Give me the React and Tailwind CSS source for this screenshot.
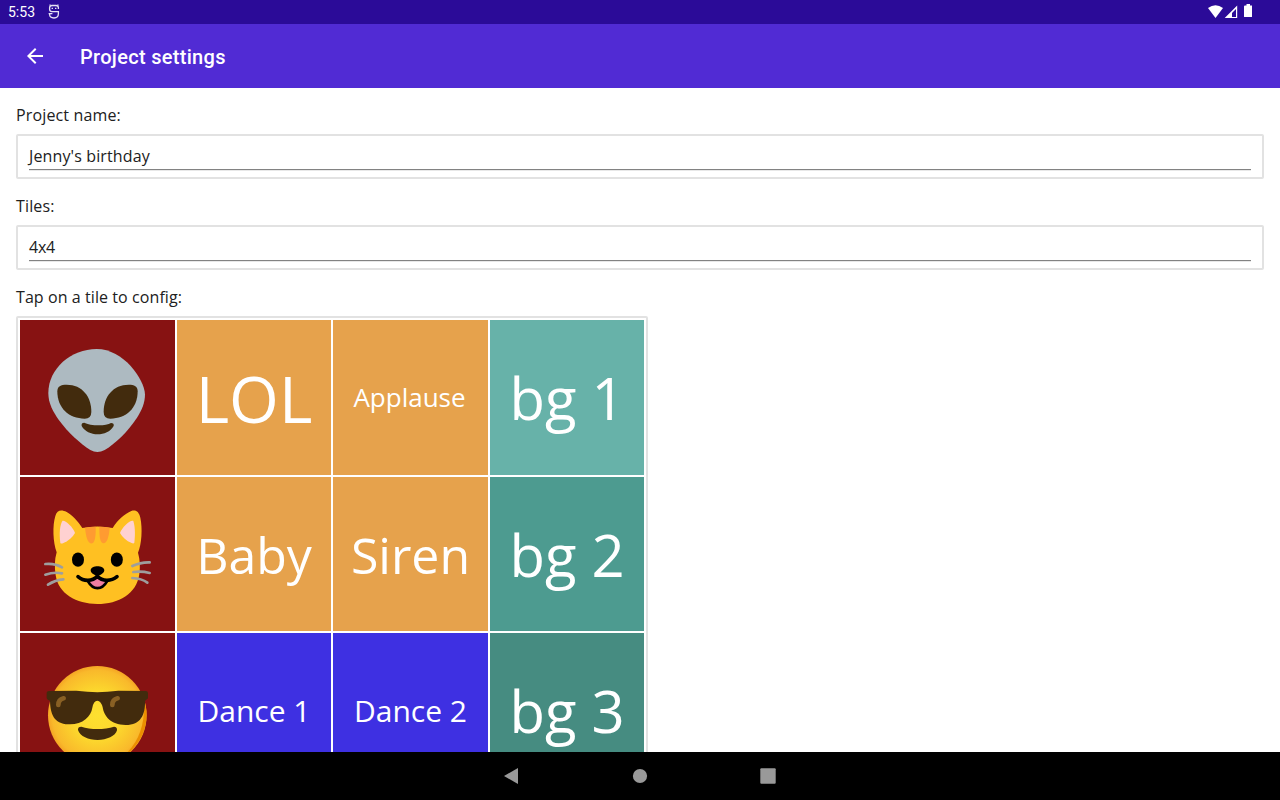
const Alien = () => (
  <svg className="h-full w-full" viewBox="12 12 465 465">
    <path fill="#adbac1" d="M242 99C165 99 97 158 97 231C97 262 111 287 128 311C157 351 193 382 223 402Q244 414 266 402C298 382 334 349 363 305C378 282 387 260 387 235C385 190 323 99 242 99Z" />
    <path fill="#422b0d" d="M124 226C124 211 134 206 152 206C199 206 226 242 226 287Q226 308 206 308C159 308 124 277 124 226Z" />
    <path fill="#422b0d" d="M365 226C365 211 355 206 338 206C291 206 263 242 263 287Q263 308 283 308C330 308 365 277 365 226Z" />
    <path fill="#422b0d" d="M197 330Q195 320 205 320C220 329 268 332 285 321Q295 321 293 330C283 347 264 355 245 355C225 355 206 346 197 330Z" />
  </svg>
);

const Cat = () => (
  <svg className="h-full w-full" viewBox="12 9 465 462">
    <path fill="#ffc022" d="M122 235C111 205 109 155 118 126C123 108 136 106 152 114C168 122 186 142 199 162Q244 153 290 162C305 138 326 119 346 111C360 106 369 114 373 131C380 164 377 210 366 236C372 257 373 278 370 300C362 360 308 390 244 390C181 390 127 359 119 304Q113 266 122 235Z" />
    <path fill="#ffd1d1" d="M133 207C129 176 132 153 139 141C144 136 171 158 177 177C170 189 158 201 141 208Q135 210 133 207Z" />
    <path fill="#ffd1d1" d="M355 206C359 176 356 153 352 141C345 136 319 158 312 177C319 189 331 201 347 207Q353 210 355 206Z" />
    <path fill="#ff9b31" d="M207 161Q223 158 239 158C240 183 237 205 229 208C215 210 210 190 207 161Z" />
    <path fill="#ff9b31" d="M250 158Q265 158 281 161C279 188 273 209 261 208C250 203 250 180 250 158Z" />
    <ellipse cx="186" cy="257" rx="18" ry="21.500" />
    <ellipse cx="302.500" cy="257" rx="18" ry="21.500" />
    <path fill="#f07ea0" d="M219 328Q233 314 244 307Q257 315 271 328Q261 340 244 341Q228 339 219 328Z" />
    <path d="M224 289C225 273 264 273 265 289C264 299 251 304 248 305L248 315L240 315L240 305C235 302 224 298 224 289Z" />
    <path fill="none" stroke="#000" strokeWidth="11" strokeLinecap="round" strokeLinejoin="round" d="M186 308C203 323 229 323 244 307C259 323 285 323 303 308" />
    <path fill="none" stroke="#000" strokeWidth="8" strokeLinejoin="round" d="M216 322C231 349 258 349 273 322" />
    <path fill="none" stroke="#9e9e9e" strokeWidth="8" strokeLinecap="round" d="M88 270Q116 267 138 280M88 302Q114 293 138 298M96 332Q118 318 142 316M349 276Q374 264 401 265M352 294Q378 291 401 297M349 312Q377 313 394 326" />
  </svg>
);

const Sunglasses = () => (
  <svg className="h-full w-full" viewBox="12 15 465 465">
    <defs>
      <radialGradient id="face" cx="244" cy="262" r="150" gradientUnits="userSpaceOnUse">
        <stop offset="0" stopColor="#fde030" />
        <stop offset=".5" stopColor="#fcd72d" />
        <stop offset=".9" stopColor="#f9b92b" />
        <stop offset="1" stopColor="#f4a223" />
      </radialGradient>
    </defs>
    <circle cx="244" cy="262" r="148" fill="url(#face)" />
    <path fill="#eb8f00" d="M384 214C407 284 377 356 313 392C369 349 388 290 384 214Z" />
    <path fill="#422b0d" d="M92 196Q92 189 100 189L181 188Q215 191 244 193Q273 191 307 188L389 189Q396 189 396 196L396 211Q390 216 387 219C388 260 375 291 329 291C283 291 264 263 260 238Q255 218 244 218Q233 218 229 239C225 266 199 291 157 289C113 287 103 257 102 218Q94 216 92 211Z" />
    <path fill="none" stroke="#896024" strokeWidth="14" strokeLinecap="round" strokeLinejoin="round" d="M127 231Q127 215 143 211M289 231Q289 215 305 211" />
    <path fill="#422b0d" d="M186 306Q185 296 196 296C224 306 267 305 294 296Q304 296 303 307C299 324 272 336 245 336C217 336 192 325 186 306Z" />
  </svg>
);

const tiles = [
  { icon: Alien, style: "bg-[#871212]" },
  { text: "LOL", style: "bg-[#e6a24c] text-[64px] pt-0.5" },
  { text: "Applause", style: "bg-[#e6a24c] text-[26px] pr-0.5 pb-0.5" },
  { text: "bg 1", style: "bg-[#67b2a9] text-[58px]" },
  { icon: Cat, style: "bg-[#871212]" },
  { text: "Baby", style: "bg-[#e6a24c] text-[50px] pt-0.5" },
  { text: "Siren", style: "bg-[#e6a24c] text-[50px] pt-0.5" },
  { text: "bg 2", style: "bg-[#4d9b90] text-[58px] pt-0.5" },
  { icon: Sunglasses, style: "bg-[#871212]" },
  { text: "Dance 1", style: "bg-[#3e30e2] text-[30px]" },
  { text: "Dance 2", style: "bg-[#3e30e2] text-[30px]" },
  { text: "bg 3", style: "bg-[#468c81] text-[58px]" },
];

const Field = ({ label, value, valueStyle }) => (
  <div className="h-[91px]">
    <div className="h-[46px] pt-[15px] leading-6 tracking-[0.14px]">{label}</div>
    <div className="h-[45px] rounded-[2px] border-2 border-[#e2e2e2] px-[11px] pt-[9px]">
      <div className={`h-[25px] border-b border-[#828282] leading-[22px] shadow-[0_1px_0_#e8e8e8] ${valueStyle}`}>{value}</div>
    </div>
  </div>
);

export default function App() {
  return (
    <div className="flex h-[800px] w-[1280px] flex-col overflow-hidden bg-white font-['Open_Sans',sans-serif] text-base text-[#212121]">
      <div className="flex h-6 shrink-0 items-center bg-[#2b0b98] pl-2 font-[Roboto,sans-serif] text-sm text-white">
        <span className="w-10">5:53</span>
        <svg className="h-4 w-3" viewBox="0 0 12 16" fill="none" stroke="#e6e1f4" strokeWidth="1.3">
          <path d="M10.400 5V3.800Q10.400 1.500 8 1.500H4Q1.600 1.500 1.600 3.800V5.200Q1.600 7.600 4 7.600H10.400V9.500Q10.400 14 6 14Q1.600 14 1.600 10.200M.6 9.700H4.400" />
          <path d="M3.600 4.300H5M7 4.300H8.400M2.500 1.200L1.500.8M9.500 1.200L10.500.8" />
        </svg>
        <svg className="ml-auto mr-[27px] h-4 w-[46px]" viewBox="0 0 46 16" fill="#fff">
          <path d="M1 4Q8.500-1.500 16 4L8.500 14Z" />
          <path fillRule="evenodd" d="M30.200 1.500V14H17.700ZM29 5L25 9V13H29Z" />
          <path d="M38 1.500H39.500V0H43V1.500H45V12.500Q45 13 44.500 13H37.500Q37 13 37 12.500V2.500Q37 1.500 38 1.500Z" />
        </svg>
      </div>
      <header className="flex h-16 shrink-0 items-center bg-[#512bd4] text-white">
        <svg className="ml-[23px] h-6 w-6" viewBox="0 0 24 24" fill="currentColor">
          <path d="M20 11H7.830l5.590-5.590L12 4l-8 8 8 8 1.410-1.410L7.830 13H20v-2z" />
        </svg>
        <h1 className="ml-[33px] pt-[2px] font-[Roboto,sans-serif] text-xl font-medium tracking-[0.3px]">Project settings</h1>
      </header>
      <main className="min-h-0 flex-1 overflow-hidden px-4">
        <Field label="Project name:" value="Jenny's birthday" valueStyle="tracking-[0.13px]" />
        <Field label="Tiles:" value="4x4" valueStyle="tracking-[-0.2px]" />
        <div className="h-[46px] pt-[15px] leading-6 tracking-[0.08px]">Tap on a tile to config:</div>
        <div className="grid w-[632px] grid-cols-[155px_154px_155px_154px] grid-rows-[155px_154px_155px] gap-0.5 rounded-[2px] border-2 border-[#e2e2e2] p-0.5">
          {tiles.map(({ icon: Icon, text, style }, i) => (
            <div key={i} className={`flex items-center justify-center overflow-hidden whitespace-nowrap leading-none text-white ${style}`}>
              {Icon ? <Icon /> : text}
            </div>
          ))}
        </div>
      </main>
      <nav className="flex h-12 shrink-0 items-center justify-center gap-28 bg-black">
        <svg className="h-4 w-4" viewBox="0 0 16 16" fill="#999"><path d="M14 0V16L0 8Z" /></svg>
        <svg className="h-4 w-4" viewBox="0 0 16 16" fill="#999"><circle cx="8" cy="8" r="7.100" /></svg>
        <svg className="h-4 w-4" viewBox="0 0 16 16" fill="#999"><rect x=".3" y=".3" width="15.400" height="15.400" rx="1" /></svg>
      </nav>
    </div>
  );
}
